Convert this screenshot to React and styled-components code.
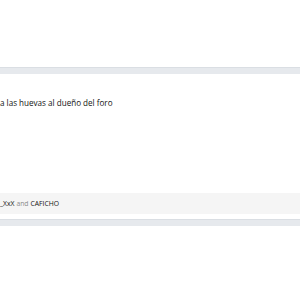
import React from "react";
import styled, { createGlobalStyle } from "styled-components";

const GlobalStyle = createGlobalStyle`
  html, body {
    margin: 0;
    padding: 0;
    background: #ffffff;
    overflow: hidden;
  }
  body {
    font-family: "Open Sans", "Noto Sans", sans-serif;
    color: #141414;
  }
`;

const Page = styled.div`
  width: 300px;
  height: 300px;
  display: flex;
  flex-direction: column;
  padding-top: 67px;
  box-sizing: border-box;
`;

const Separator = styled.div`
  height: 7px;
  background: #e6e9ed;
  border-top: 1px solid #dadee3;
  box-sizing: border-box;
`;

const Body = styled.div`
  height: 119px;
  padding-top: 23px;
  box-sizing: border-box;
  font-size: 8.1px;
  line-height: 12px;
`;

const Likes = styled.div`
  height: 21px;
  background: #f5f5f5;
  display: flex;
  align-items: center;
  font-size: 6.8px;
  color: #141414;
`;

const Muted = styled.span`
  color: #8c8c8c;
  margin: 0 2px;
`;

const Gap = styled.div`
  height: ${(p) => p.h}px;
`;

export default function App() {
  return (
    <>
      <GlobalStyle />
      <Page>
        <Separator />
        <Body>a las huevas al dueño del foro</Body>
        <Likes>
          _XxX<Muted>and</Muted>CAFICHO
        </Likes>
        <Gap h={5} />
        <Separator />
      </Page>
    </>
  );
}
